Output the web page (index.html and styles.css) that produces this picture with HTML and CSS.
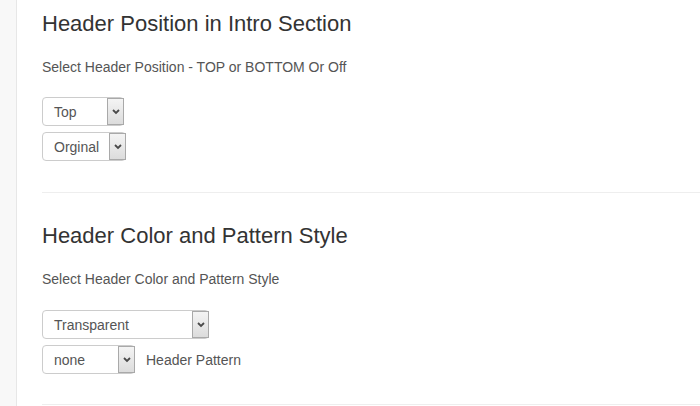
FILE: index.html
```html
<!DOCTYPE html>
<html>
<head>
<meta charset="utf-8">
<link rel="stylesheet" href="styles.css">
</head>
<body>
<div class="page">
  <aside class="side"></aside>
  <main class="content">
    <section class="sec sec-first">
      <h3 class="title">Header Position in Intro Section</h3>
      <p class="desc">Select Header Position - TOP or BOTTOM Or Off</p>
      <div class="controls">
        <div class="row">
          <div class="sel w-top"><span class="val">Top</span><i class="arrow"><svg width="8" height="6" viewBox="0 0 8 6"><polyline points="1,1 4,4 7,1" fill="none" stroke="#4a4a4a" stroke-width="1.8"/></svg></i></div>
        </div>
        <div class="row">
          <div class="sel w-orig"><span class="val">Orginal</span><i class="arrow"><svg width="8" height="6" viewBox="0 0 8 6"><polyline points="1,1 4,4 7,1" fill="none" stroke="#4a4a4a" stroke-width="1.8"/></svg></i></div>
        </div>
      </div>
    </section>
    <hr class="rule">
    <section class="sec sec-second">
      <h3 class="title">Header Color and Pattern Style</h3>
      <p class="desc">Select Header Color and Pattern Style</p>
      <div class="controls controls-b">
        <div class="row">
          <div class="sel w-trans"><span class="val">Transparent</span><i class="arrow"><svg width="8" height="6" viewBox="0 0 8 6"><polyline points="1,1 4,4 7,1" fill="none" stroke="#4a4a4a" stroke-width="1.8"/></svg></i></div>
        </div>
        <div class="row">
          <div class="sel w-none"><span class="val">none</span><i class="arrow"><svg width="8" height="6" viewBox="0 0 8 6"><polyline points="1,1 4,4 7,1" fill="none" stroke="#4a4a4a" stroke-width="1.8"/></svg></i></div>
          <span class="label">Header Pattern</span>
        </div>
      </div>
    </section>
    <hr class="rule rule-b">
  </main>
</div>
</body>
</html>
```
FILE: styles.css
```css
html, body {
  margin: 0;
  padding: 0;
  background: #fff;
  font-family: "Liberation Sans", Arial, sans-serif;
  color: #333;
}
.page {
  display: flex;
  height: 406px;
  overflow: hidden;
}
.side {
  width: 16px;
  flex: none;
  background: #f8f8f8;
  border-right: 1px solid #e7e7e7;
}
.content {
  flex: 1;
  padding: 12px 0 0 25px;
}
.title {
  margin: 0;
  font-size: 22px;
  line-height: 24px;
  font-weight: normal;
  color: #333;
}
.sec-second .title {
  margin-top: 31px;
}
.desc {
  margin: 21px 0 0;
  font-size: 14px;
  line-height: 20px;
  color: #555;
}
.controls {
  margin-top: 20px;
  display: flex;
  flex-direction: column;
  gap: 6px;
}
.controls-b {
  margin-top: 21px;
}
.row {
  display: flex;
  align-items: center;
}
.sel {
  box-sizing: border-box;
  height: 29px;
  display: flex;
  align-items: center;
  border: 1px solid #ccc;
  border-radius: 4px;
  background: #fff;
  font-size: 14px;
  color: #555;
}
.val {
  flex: 1;
  padding-left: 11px;
  white-space: nowrap;
}
.arrow {
  box-sizing: border-box;
  width: 17px;
  height: 27px;
  margin-right: -1px;
  border: 1px solid #a9a9a9;
  background: linear-gradient(#f4f4f4, #dcdcdc);
  display: flex;
  align-items: center;
  justify-content: center;
}
.w-top { width: 82px; }
.w-orig { width: 84px; }
.w-trans { width: 167px; }
.w-none { width: 93px; }
.label {
  margin-left: 11px;
  font-size: 14px;
  color: #555;
}
.rule {
  margin: 31px 0 0;
  border: 0;
  border-top: 1px solid #eee;
  height: 0;
}
.rule-b {
  margin-top: 30px;
}
```
